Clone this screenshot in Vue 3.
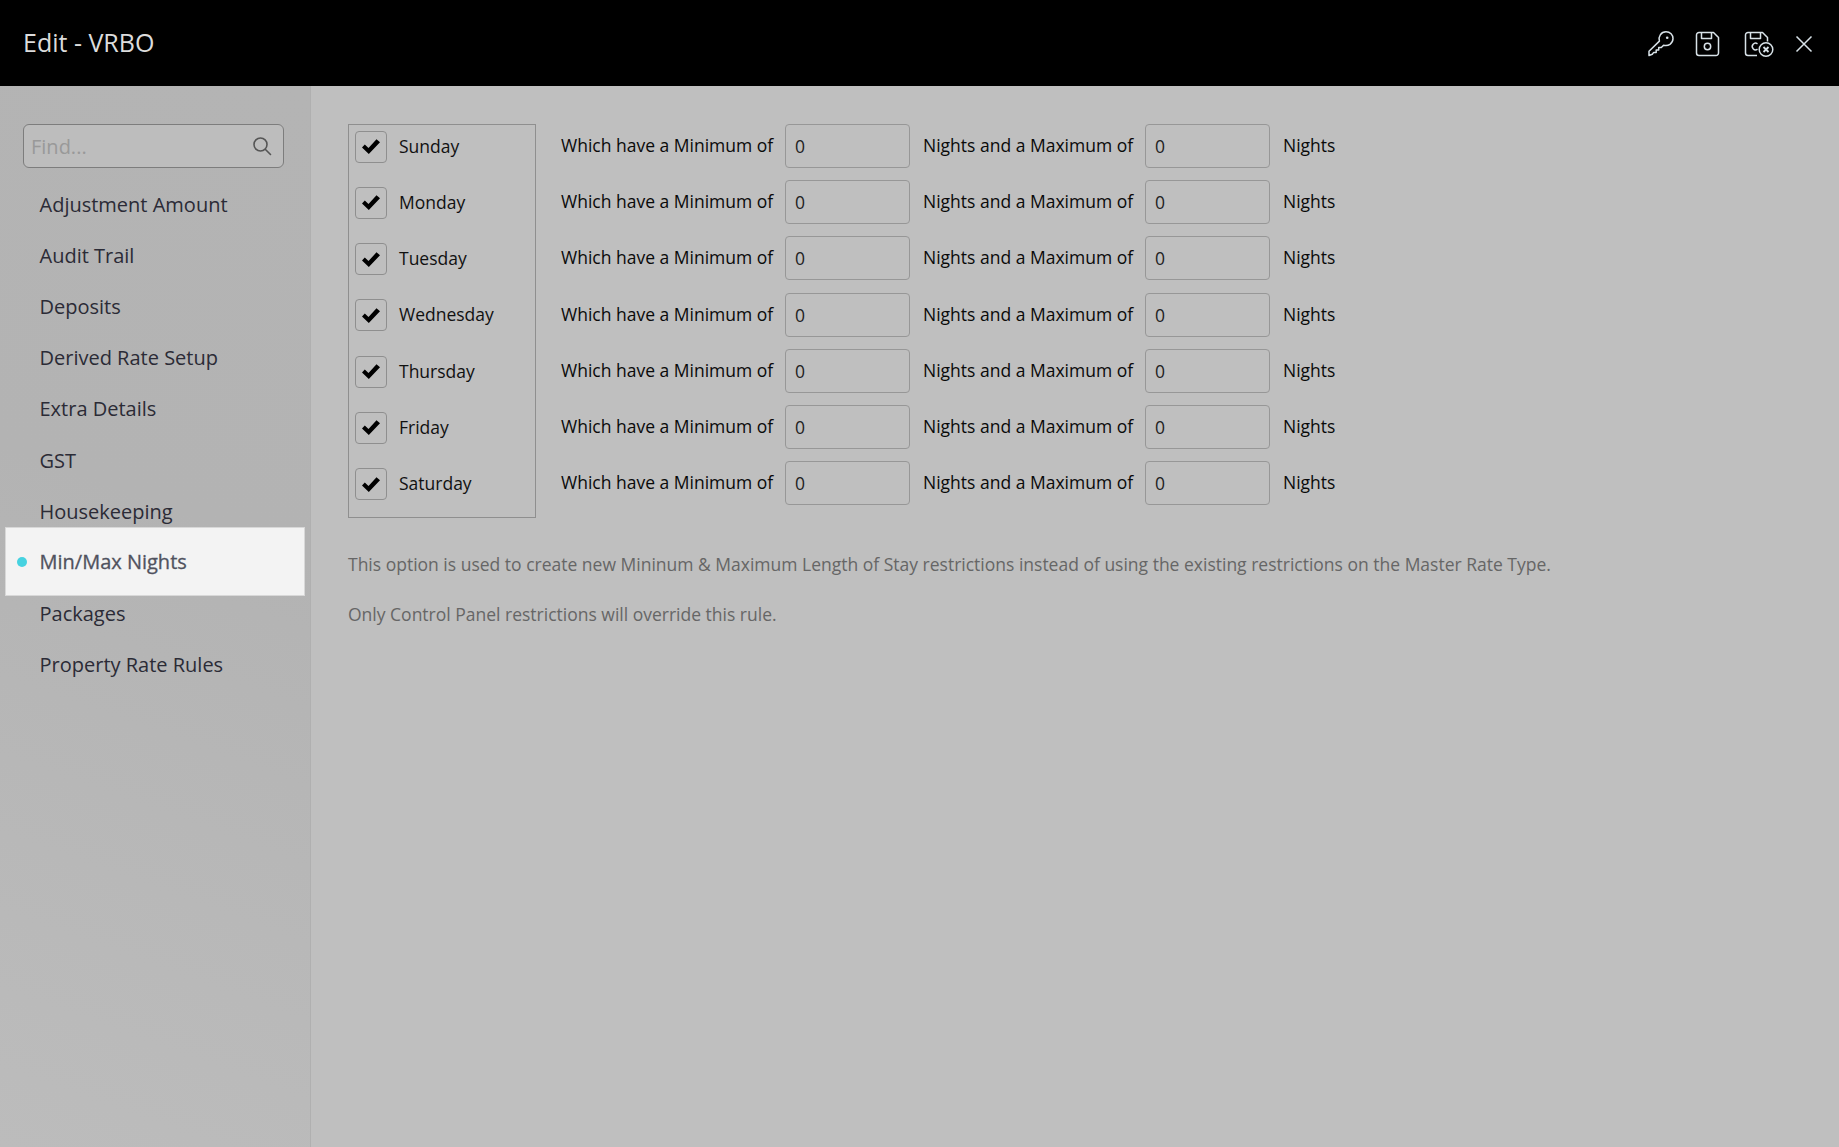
<script setup>
const nav = ['Adjustment Amount','Audit Trail','Deposits','Derived Rate Setup','Extra Details','GST','Housekeeping','Min/Max Nights','Packages','Property Rate Rules']
const days = ['Sunday','Monday','Tuesday','Wednesday','Thursday','Friday','Saturday']
</script>

<template>
  <div class="app">
    <header class="top">
      <h1 class="title">Edit - VRBO</h1>
      <div class="actions">
        <svg class="ic" width="30" height="30" viewBox="0 0 30 30" fill="none" stroke="#d8e2e8" stroke-width="1.5" stroke-linejoin="round" stroke-linecap="round">
          <path d="M3 26.5v-4.2l10.4-10.2c-1.4-4.4 1.6-9.3 6.6-9.3 4.2 0 7 3.2 7 6.8 0 5-4.8 8-9.4 6.6l-2.3 2.4h-2.6v2.4h-2.5v2.4h-2.5l-1.4 1.8z"/>
          <circle cx="21.2" cy="8.8" r="1.3" fill="#d8e2e8" stroke="none"/>
        </svg>
        <svg class="ic sv" width="26" height="26" viewBox="0 0 26 26" fill="none" stroke="#d8e2e8" stroke-width="1.5" stroke-linejoin="round">
          <path d="M4 1.500h14.500l5 5V22a2.500 2.500 0 0 1-2.500 2.500H4A2.500 2.500 0 0 1 1.500 22V4A2.500 2.500 0 0 1 4 1.500z"/>
          <path d="M6.500 1.500v6h10v-6"/>
          <circle cx="12.500" cy="15.500" r="3.200"/>
        </svg>
        <svg class="ic sx" width="30" height="27" viewBox="0 0 30 27" fill="none" stroke="#d8e2e8" stroke-width="1.500" stroke-linejoin="round">
          <path d="M13 24.500H4A2.500 2.500 0 0 1 1.500 22V4A2.500 2.500 0 0 1 4 1.500h14.500l5 5v4"/>
          <path d="M6.500 1.500v6h10v-6"/>
          <path d="M13.500 12.800a3.300 3.300 0 1 0 0 5.400"/>
          <circle cx="22" cy="18.500" r="6.800"/>
          <path d="M19.500 16l5 5M24.500 16l-5 5" stroke-width="1.800"/>
        </svg>
        <svg class="ic cl" width="18" height="18" viewBox="0 0 18 18" fill="none" stroke="#d8e2e8" stroke-width="1.500">
          <path d="M1.500 1.500l15 15M16.500 1.500l-15 15"/>
        </svg>
      </div>
    </header>
    <div class="body">
      <aside class="side">
        <div class="find">
          <span class="ph">Find...</span>
          <svg width="20" height="20" viewBox="0 0 20 20" fill="none" stroke="#555" stroke-width="1.600" stroke-linecap="round">
            <circle cx="8.500" cy="8.500" r="6.500"/>
            <path d="M13.500 13.500l5 5"/>
          </svg>
        </div>
        <ul class="nav">
          <li v-for="n in nav" :key="n" :class="['item', { on: n === 'Min/Max Nights' }]">{{ n }}</li>
        </ul>
      </aside>
      <main class="main">
        <div class="form">
          <div class="days">
            <label v-for="d in days" :key="d" class="day">
              <span class="box">
                <svg width="18" height="15" viewBox="0 0 18 15"><polygon points="0,8.500 2.800,5.500 6.500,9 14.500,0.300 18,3.200 6.800,15" fill="#000"/></svg>
              </span>
              <span class="dname">{{ d }}</span>
            </label>
          </div>
          <div class="rules">
            <div v-for="d in days" :key="d" class="rule">
              <span class="l1">Which have a Minimum of</span>
              <span class="inp">0</span>
              <span class="l2">Nights and a Maximum of</span>
              <span class="inp">0</span>
              <span class="l3">Nights</span>
            </div>
          </div>
        </div>
        <p class="note first">This option is used to create new Mininum &amp; Maximum Length of Stay restrictions instead of using the existing restrictions on the Master Rate Type.</p>
        <p class="note">Only Control Panel restrictions will override this rule.</p>
      </main>
    </div>
  </div>
</template>

<style>
html, body { margin: 0; background: #bfbfbf; }
</style>

<style scoped>
.app { width: 1839px; height: 1147px; display: flex; flex-direction: column; font-family: "Open Sans", "Liberation Sans", sans-serif; overflow: hidden; background: #bfbfbf; }
.top { height: 86px; flex: none; background: #000; display: flex; align-items: center; justify-content: space-between; padding: 0 26px 0 23px; }
.title { margin: 0 0 2px; font-size: 25px; font-weight: 400; color: #dcdcdc; }
.actions { display: flex; align-items: center; padding-top: 2px; }
.ic { display: block; }
.sv { margin-left: 19px; }
.sx { margin-left: 23px; }
.cl { margin-left: 21px; }
.body { flex: 1; display: flex; min-height: 0; }
.side { flex: none; border-right: 1px solid #b0b0b0; background: linear-gradient(200deg, #b4b4b4 0%, #b3b3b3 40%, #bcbcbc 100%); padding: 38px 0 0 5px; width: 305px; }
.find { width: 261px; height: 44px; box-sizing: border-box; margin-left: 18px; border: 1px solid #7d7d7d; border-radius: 6px; background: #bdbdbd; display: flex; align-items: center; justify-content: space-between; padding: 0 11px 0 7px; }
.ph { color: #999; font-size: 20px; }
.nav { list-style: none; margin: 10.500px 0 0; padding: 0; }
.item { height: 51.200px; display: flex; align-items: center; padding-left: 34.500px; margin-right: 5px; font-size: 20px; color: #2b2b36; box-sizing: border-box; }
.item.on { position: relative; height: 69px; margin-top: -10px; margin-bottom: -8px; background: #f3f3f3; border: 1px solid #d8d8d8; padding-left: 33.500px; color: #50525e; -webkit-text-stroke: 0.3px #50525e; }
.item.on::before { content: ""; position: absolute; left: 11px; top: 29px; width: 10px; height: 10px; border-radius: 50%; background: #46d2e0; }
.main { flex: 1; padding: 38px 0 0 37px; min-width: 0; }
.form { display: flex; }
.days { width: 188px; height: 394px; box-sizing: border-box; border: 1px solid #8f8f8f; padding: 5.500px 0 0 6px; display: flex; flex-direction: column; }
.day { height: 56.300px; flex: none; display: flex; align-items: flex-start; font-size: 17.500px; color: #111; box-sizing: border-box; }
.box { width: 32px; height: 32px; flex: none; box-sizing: border-box; border: 1px solid #8f8f8f; border-radius: 4px; margin-right: 12px; display: flex; align-items: center; justify-content: center; }
.dname { line-height: 30px; }
.rules { margin-left: 25px; display: flex; flex-direction: column; }
.rule { height: 56.200px; flex: none; display: flex; align-items: flex-start; font-size: 17.500px; color: #0a0a0a; line-height: 42px; }
.l1 { width: 224px; }
.l2 { width: 235px; padding-left: 13px; box-sizing: border-box; }
.l3 { margin-left: 13px; }
.inp { width: 125px; height: 44px; box-sizing: border-box; border: 1px solid #979797; border-radius: 4px; padding: 0 9px; display: flex; align-items: center; font-size: 17.500px; color: #222; }
.note { margin: 0; font-size: 17.500px; color: #666; }
.first { margin-top: 34px; margin-bottom: 26px; }
</style>
